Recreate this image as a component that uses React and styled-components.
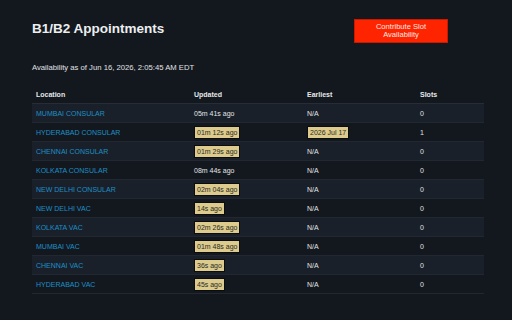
import React from "react";
import styled, { createGlobalStyle } from "styled-components";

const rows = [
  { location: "MUMBAI CONSULAR", updated: "05m 41s ago", fresh: false, earliest: "N/A", slots: 0 },
  { location: "HYDERABAD CONSULAR", updated: "01m 12s ago", fresh: true, earliest: "2026 Jul 17", slots: 1 },
  { location: "CHENNAI CONSULAR", updated: "01m 29s ago", fresh: true, earliest: "N/A", slots: 0 },
  { location: "KOLKATA CONSULAR", updated: "08m 44s ago", fresh: false, earliest: "N/A", slots: 0 },
  { location: "NEW DELHI CONSULAR", updated: "02m 04s ago", fresh: true, earliest: "N/A", slots: 0 },
  { location: "NEW DELHI VAC", updated: "14s ago", fresh: true, earliest: "N/A", slots: 0 },
  { location: "KOLKATA VAC", updated: "02m 26s ago", fresh: true, earliest: "N/A", slots: 0 },
  { location: "MUMBAI VAC", updated: "01m 48s ago", fresh: true, earliest: "N/A", slots: 0 },
  { location: "CHENNAI VAC", updated: "36s ago", fresh: true, earliest: "N/A", slots: 0 },
  { location: "HYDERABAD VAC", updated: "45s ago", fresh: true, earliest: "N/A", slots: 0 },
];

const App = () => {
  return (
    <>
      <GlobalStyle />
      <Page>
        <Header>
          <Title>B1/B2 Appointments</Title>
          <ContributeBtn type="button">Contribute Slot Availability</ContributeBtn>
        </Header>

        <Subtitle>Availability as of Jun 16, 2026, 2:05:45 AM EDT</Subtitle>

        <Table>
          <colgroup>
            <col style={{ width: 158 }} />
            <col style={{ width: 113 }} />
            <col style={{ width: 113 }} />
            <col style={{ width: 68 }} />
          </colgroup>
          <thead>
            <tr>
              <Th>Location</Th>
              <Th>Updated</Th>
              <Th>Earliest</Th>
              <Th>Slots</Th>
            </tr>
          </thead>
          <tbody>
            {rows.map((row) => (
              <Row key={row.location}>
                <Td>
                  <LocationLink href="#">{row.location}</LocationLink>
                </Td>
                <Td>{row.fresh ? <Badge>{row.updated}</Badge> : row.updated}</Td>
                <Td>{row.slots > 0 ? <Badge>{row.earliest}</Badge> : row.earliest}</Td>
                <Td>{row.slots}</Td>
              </Row>
            ))}
          </tbody>
        </Table>
      </Page>
    </>
  );
};

export default App;

const GlobalStyle = createGlobalStyle`
  html, body {
    margin: 0;
    background: #13181e;
    font-family: "Liberation Sans", Arial, sans-serif;
    color: #e4e6e8;
  }
`;

const Page = styled.div`
  width: 452px;
  height: 320px;
  padding: 0 28px 0 32px;
  box-sizing: content-box;
`;

const Header = styled.div`
  display: flex;
  justify-content: space-between;
  align-items: flex-start;
  padding: 19px 36px 0 0;
`;

const Title = styled.h1`
  margin: 2px 0 0;
  font-size: 13.5px;
  line-height: 16px;
  font-weight: bold;
  color: #eceef0;
`;

const ContributeBtn = styled.button`
  width: 94px;
  height: 24px;
  padding: 0 10px;
  border: 1px solid #c81a00;
  background: #ff2400;
  color: #fbe9e6;
  font-family: inherit;
  font-size: 7.6px;
  line-height: 8.5px;
  text-align: center;
`;

const Subtitle = styled.p`
  margin: 20px 0 0;
  font-size: 7.7px;
  line-height: 10px;
  color: #e0e2e4;
`;

const Table = styled.table`
  width: 452px;
  margin-top: 12px;
  border-collapse: collapse;
  table-layout: fixed;
  font-size: 7px;
`;

const Th = styled.th`
  height: 18px;
  padding: 0 4px;
  text-align: left;
  font-weight: bold;
  color: #e6e8ea;
  border-bottom: 1px solid #262d36;
`;

const Row = styled.tr`
  &:nth-child(odd) {
    background: #192029;
  }
`;

const Td = styled.td`
  height: 18px;
  padding: 0 4px;
  color: #e2e4e6;
  border-bottom: 1px solid #212831;
  white-space: nowrap;
`;

const LocationLink = styled.a`
  color: #1f8fc7;
  text-decoration: none;
`;

const Badge = styled.span`
  display: inline-block;
  padding: 1px 2px;
  line-height: 9px;
  background: #dccb8c;
  color: #2a2a24;
  border: 1px solid #0a0c0e;
`;
